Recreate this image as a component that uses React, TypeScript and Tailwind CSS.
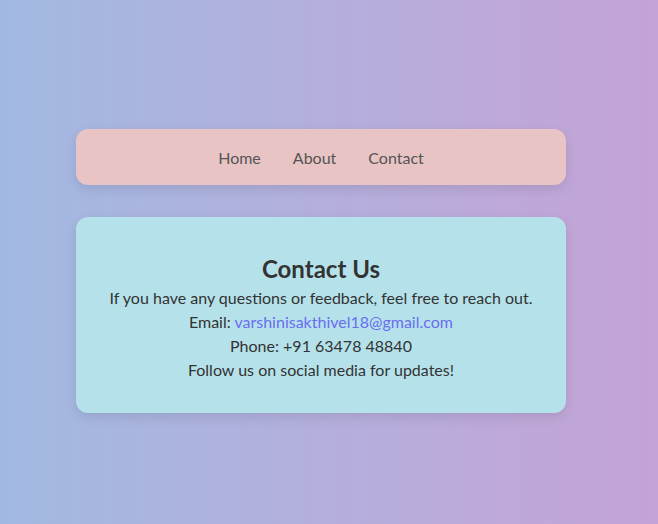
const navItems = ["Home", "About", "Contact"];

export default function App() {
  return (
    <div
      className="min-h-[524px] w-full bg-gradient-to-r from-[#a1b9e2] to-[#c4a3d6] pt-[129px] text-[#333]"
      style={{ fontFamily: "Lato, 'Open Sans', sans-serif" }}
    >
      <nav className="ml-[76px] flex h-[56px] w-[490px] items-center justify-center rounded-xl bg-[#e8c4c4] pt-[2px] shadow-[0_4px_12px_rgba(0,0,0,0.1)]">
        {navItems.map((item) => (
          <a key={item} href="#" className="mx-4 text-[16px] text-[#555]">
            {item}
          </a>
        ))}
      </nav>

      <section className="ml-[76px] mt-8 w-[490px] rounded-xl bg-[#b5e2ea] pt-[34px] pb-[30px] text-center text-[16px] leading-6 shadow-[0_4px_12px_rgba(0,0,0,0.1)]">
        <h2 className="text-[24px] font-bold leading-9">Contact Us</h2>
        <p className="-mt-px">If you have any questions or feedback, feel free to reach out.</p>
        <p>
          Email:{" "}
          <a href="#" className="text-[#6a6cf2]">
            varshinisakthivel18@gmail.com
          </a>
        </p>
        <p>Phone: +91 63478 48840</p>
        <p className="mb-px">Follow us on social media for updates!</p>
      </section>
    </div>
  );
}
